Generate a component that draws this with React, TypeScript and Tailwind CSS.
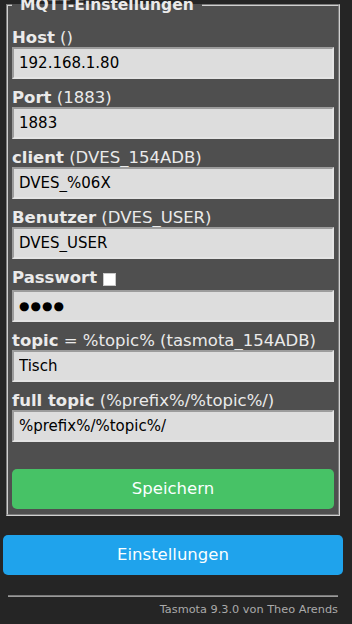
import React from 'react';

interface FieldProps {
  label: string;
  hint: string;
  value: string;
  password?: boolean;
  checkbox?: boolean;
}

const Field: React.FC<FieldProps> = ({ label, hint, value, password, checkbox }) => (
  <div className="flex flex-col">
    <div className="flex items-center h-[18px] leading-[18px] whitespace-pre text-[16.5px] text-[#eaeaea]">
      <b>{label}</b>
      <span>{hint}</span>
      {checkbox && (
        <span className="ml-[6px] mt-[3px] inline-block h-[13px] w-[13px] border border-[#c8c8c8] bg-white" />
      )}
    </div>
    {checkbox && <div className="h-[3px]" />}
    <input
      readOnly
      type="text"
      value={value}
      className={
        password
          ? 'h-[32px] w-full border-2 border-t-[#9c9c9c] border-l-[#9c9c9c] border-r-[#e4e4e4] border-b-[#e4e4e4] bg-[#dddddd] px-[5px] text-[12px] tracking-[1px] text-black outline-none'
          : 'h-[32px] w-full border-2 border-t-[#9c9c9c] border-l-[#9c9c9c] border-r-[#e4e4e4] border-b-[#e4e4e4] bg-[#dddddd] px-[5px] text-[15px] text-black outline-none'
      }
    />
  </div>
);

export default function App() {
  return (
    <div className="min-h-[624px] overflow-hidden bg-[#252525] font-['DejaVu_Sans',sans-serif] text-[15.5px]">
      <div className="-mt-[4px] ml-[3px] w-[340px]">
        <fieldset className="mx-[3px] border-2 border-[#d0d0d0] bg-[#4f4f4f] px-[4px] pb-[5px] [border-style:groove]">
          <legend className="px-[8px] font-bold leading-[18px] text-[#eaeaea]">MQTT-Einstellungen</legend>
          <div className="mt-[15px] flex flex-col gap-[10px]">
            <Field label="Host" hint=" ()" value="192.168.1.80" />
            <Field label="Port" hint=" (1883)" value="1883" />
            <Field label="client" hint=" (DVES_154ADB)" value="DVES_%06X" />
            <Field label="Benutzer" hint=" (DVES_USER)" value="DVES_USER" />
            <Field label="Passwort" hint="" value="●●●●" password checkbox />
            <Field label="topic" hint=" = %topic% (tasmota_154ADB)" value="Tisch" />
            <Field label="full topic" hint=" (%prefix%/%topic%/)" value="%prefix%/%topic%/" />
          </div>
          <button className="mt-[27px] h-10 w-full rounded-[5px] bg-[#47c266] text-[16.5px] text-[#faffff]">
            Speichern
          </button>
        </fieldset>
        <button className="mt-[19px] h-10 w-full rounded-[5px] bg-[#1fa3ec] text-[16.5px] text-[#faffff]">
          Einstellungen
        </button>
        <div className="mx-[5px] mt-[20px] border-t border-b border-t-[#7a7a7a] border-b-[#9a9a9a]" />
        <div className="mt-[5px] pr-[5px] text-right text-[11.3px] text-[#aaaaaa]">
          Tasmota 9.3.0 von Theo Arends
        </div>
      </div>
    </div>
  );
}
